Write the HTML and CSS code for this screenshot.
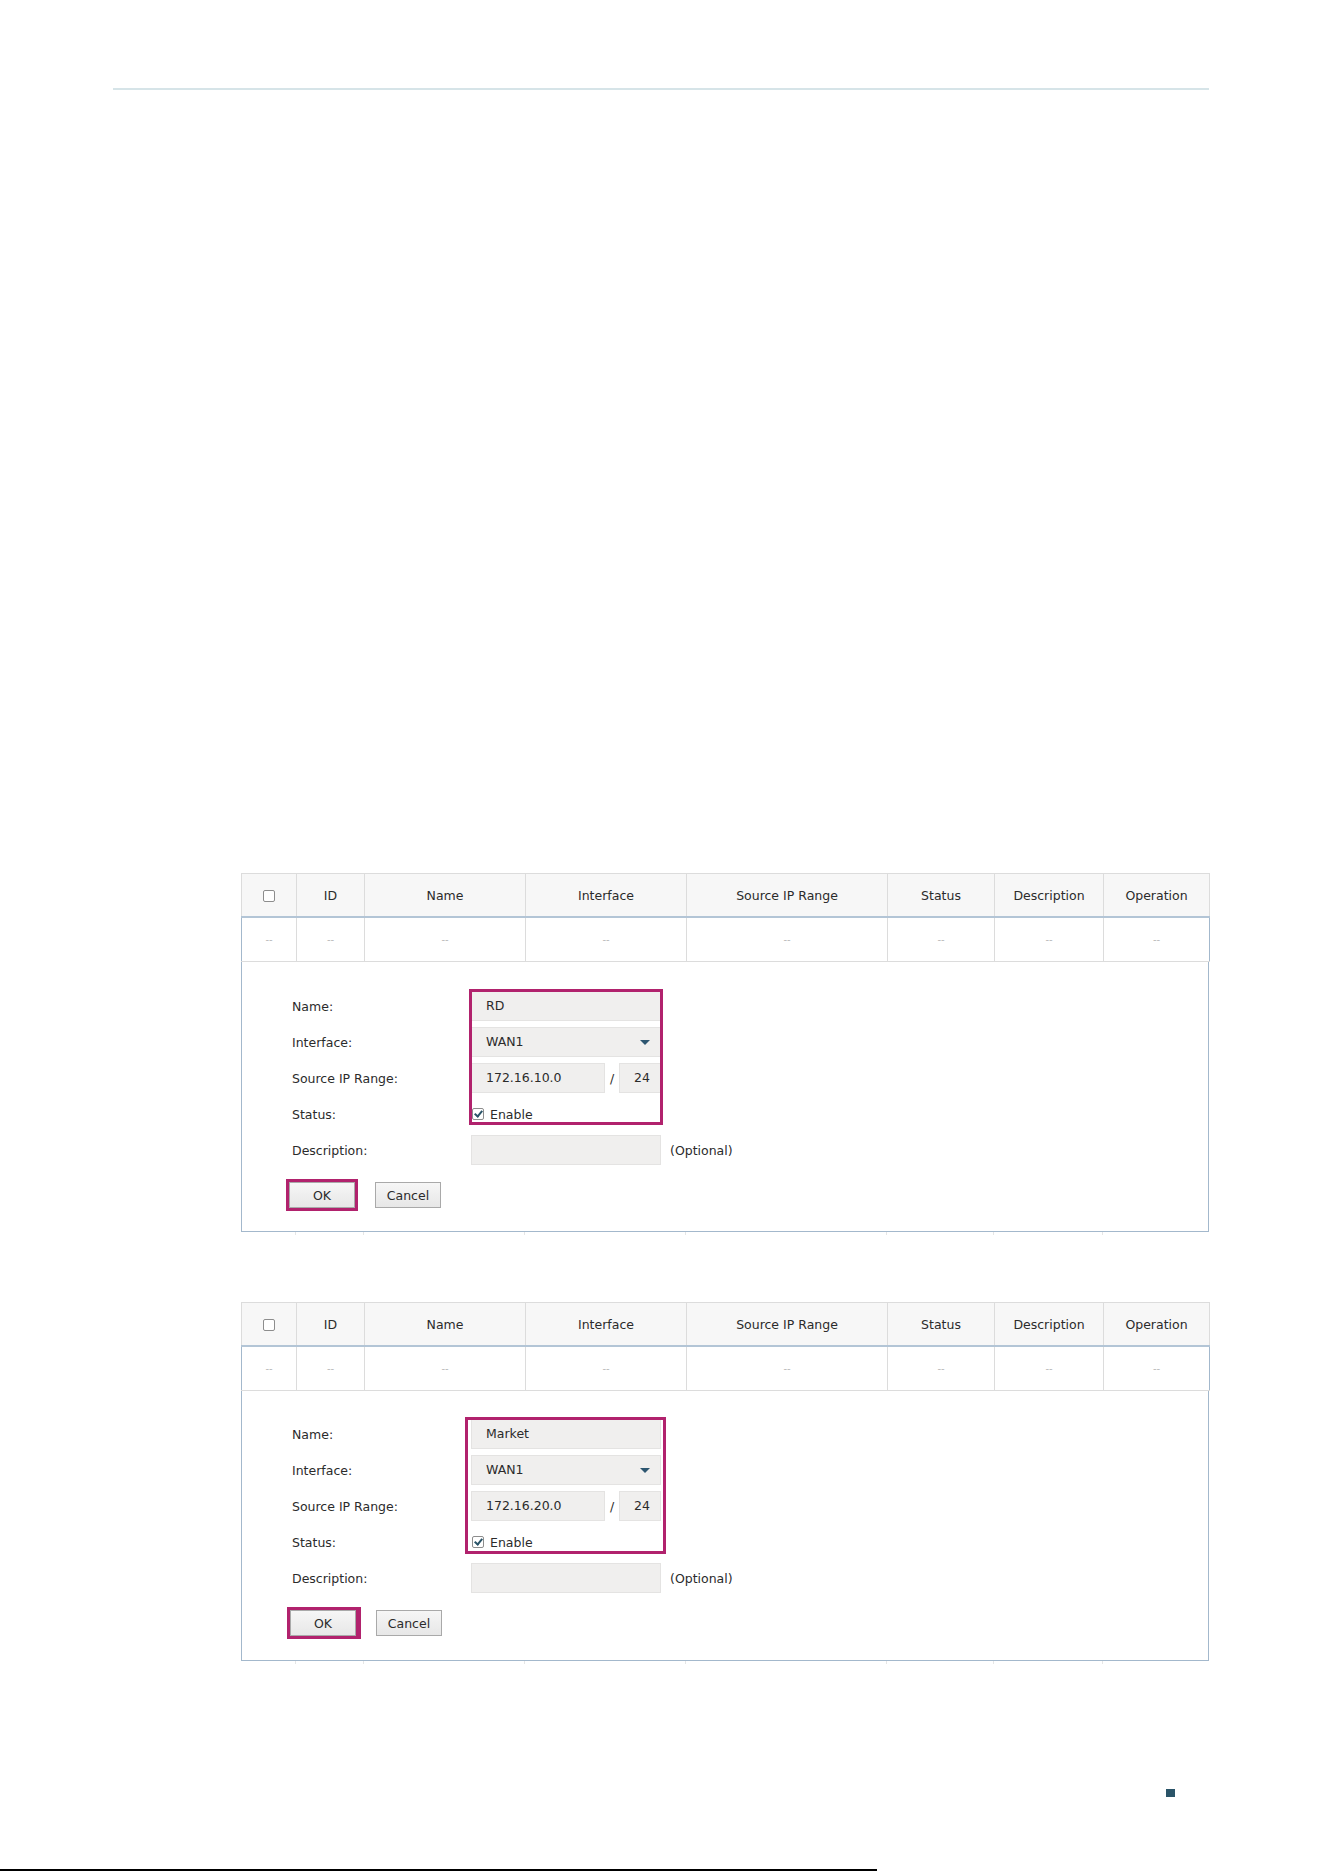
FILE: index.html
```html
<!DOCTYPE html>
<html lang="en">
<head>
  <meta charset="UTF-8" />
  <title>Policy Routing - User Groups</title>
  <link rel="stylesheet" href="styles.css">
</head>
<body>
  <div class="page">
    <div class="rule"></div>

    <!-- first entry: RD -->
    <div class="figure fig-rd">
      <table class="grid">
        <colgroup>
          <col style="width:55px"><col style="width:68px"><col style="width:161px"><col style="width:161px">
          <col style="width:201px"><col style="width:107px"><col style="width:109px"><col style="width:106px">
        </colgroup>
        <thead>
          <tr>
            <th><span class="box"></span></th>
            <th>ID</th>
            <th>Name</th>
            <th>Interface</th>
            <th>Source IP Range</th>
            <th>Status</th>
            <th>Description</th>
            <th>Operation</th>
          </tr>
        </thead>
        <tbody>
          <tr>
            <td>--</td><td>--</td><td>--</td><td>--</td><td>--</td><td>--</td><td>--</td><td>--</td>
          </tr>
        </tbody>
      </table>

      <div class="editor">
        <div class="fields">
          <label>Name:</label>
          <div class="input">RD</div>
          <span></span>

          <label>Interface:</label>
          <div class="input select">WAN1<span class="caret"></span></div>
          <span></span>

          <label>Source IP Range:</label>
          <div class="ip">
            <div class="input ip-addr">172.16.10.0</div>
            <span class="slash">/</span>
            <div class="input ip-mask">24</div>
          </div>
          <span></span>

          <label>Status:</label>
          <div class="check"><span class="box checked"></span>Enable</div>
          <span></span>

          <label>Description:</label>
          <div class="input"></div>
          <span class="hint">(Optional)</span>

          <div class="mark"></div>
        </div>

        <div class="actions">
          <span class="ok-mark"><button class="btn">OK</button></span>
          <button class="btn">Cancel</button>
        </div>
      </div>
      <div class="stubs"><i></i><i></i><i></i><i></i><i></i><i></i><i></i><i></i></div>
    </div>

    <!-- second entry: Market -->
    <div class="figure fig-market">
      <table class="grid">
        <colgroup>
          <col style="width:55px"><col style="width:68px"><col style="width:161px"><col style="width:161px">
          <col style="width:201px"><col style="width:107px"><col style="width:109px"><col style="width:106px">
        </colgroup>
        <thead>
          <tr>
            <th><span class="box"></span></th>
            <th>ID</th>
            <th>Name</th>
            <th>Interface</th>
            <th>Source IP Range</th>
            <th>Status</th>
            <th>Description</th>
            <th>Operation</th>
          </tr>
        </thead>
        <tbody>
          <tr>
            <td>--</td><td>--</td><td>--</td><td>--</td><td>--</td><td>--</td><td>--</td><td>--</td>
          </tr>
        </tbody>
      </table>

      <div class="editor">
        <div class="fields">
          <label>Name:</label>
          <div class="input">Market</div>
          <span></span>

          <label>Interface:</label>
          <div class="input select">WAN1<span class="caret"></span></div>
          <span></span>

          <label>Source IP Range:</label>
          <div class="ip">
            <div class="input ip-addr">172.16.20.0</div>
            <span class="slash">/</span>
            <div class="input ip-mask">24</div>
          </div>
          <span></span>

          <label>Status:</label>
          <div class="check"><span class="box checked"></span>Enable</div>
          <span></span>

          <label>Description:</label>
          <div class="input"></div>
          <span class="hint">(Optional)</span>

          <div class="mark"></div>
        </div>

        <div class="actions">
          <span class="ok-mark"><button class="btn">OK</button></span>
          <button class="btn">Cancel</button>
        </div>
      </div>
      <div class="stubs"><i></i><i></i><i></i><i></i><i></i><i></i><i></i><i></i></div>
    </div>

    <div class="foot">
      <span class="page-mark"></span>
    </div>
    <div class="cut-line"></div>
  </div>
</body>
</html>
```

FILE: styles.css
```css
:root {
  --text: #2b2b2b;
  --line: #dcdcdc;
  --frame: #a3b8cc;
  --field: #f0efee;
  --mark: #b1226d;
  --navy: #2a5468;
}

body {
  margin: 0;
  background: #fff;
  color: var(--text);
  font-family: 'DejaVu Sans', Verdana, sans-serif;
  font-size: 12.5px;
}

.page {
  width: 1324px;
  height: 1872px;
  overflow: hidden;
  padding-top: 88px;
  box-sizing: border-box;
}

.rule {
  height: 2px;
  margin: 0 115px 0 113px;
  background: #d6e4e8;
}

.figure {
  width: 968px;
  margin-left: 241px;
}

.fig-rd { margin-top: 783px; }
.fig-market { margin-top: 67px; }

/* list table */
.grid {
  width: 968px;
  table-layout: fixed;
  border-collapse: collapse;
}

.grid th {
  height: 42px;
  padding: 0;
  background: #f7f7f7;
  border: 1px solid var(--line);
  border-bottom: 2px solid #b3c5d6;
  font-weight: normal;
  text-align: center;
}

.grid td {
  height: 43px;
  padding: 0;
  border: 1px solid var(--line);
  border-top: none;
  text-align: center;
  color: #bbb;
  font-size: 10px;
}

.grid td:first-child { border-left-color: var(--frame); }
.grid td:last-child { border-right-color: var(--frame); }

.box {
  display: inline-block;
  width: 10px;
  height: 10px;
  border: 1px solid #8d8d8d;
  border-radius: 2px;
  background: #fff;
  vertical-align: middle;
  position: relative;
}

.box.checked::after {
  content: "";
  position: absolute;
  left: 3px;
  top: 0;
  width: 3px;
  height: 6px;
  border: solid var(--navy);
  border-width: 0 2px 2px 0;
  transform: rotate(40deg);
}

/* edit panel */
.editor {
  border: 1px solid var(--frame);
  border-top: none;
  padding: 29px 0 20px 48px;
}

.fig-market .editor { padding: 28px 0 21px 48px; }

.fields {
  position: relative;
  display: grid;
  grid-template-columns: 181px 190px auto;
  grid-auto-rows: 30px;
  row-gap: 6px;
  align-items: center;
}

.fields label {
  padding-left: 2px;
}

.input {
  height: 28px;
  line-height: 28px;
  padding: 0 14px;
  background: var(--field);
  border: 1px solid #e4e3e2;
  box-sizing: content-box;
  white-space: nowrap;
}

.fields > .input {
  width: 160px;
}

.select {
  position: relative;
}

.caret {
  position: absolute;
  right: 10px;
  top: 12px;
  border-left: 5px solid transparent;
  border-right: 5px solid transparent;
  border-top: 5px solid #2d5670;
}

.ip {
  display: flex;
  align-items: center;
}

.ip-addr { width: 106px; }
.ip-mask { width: 12px; }

.slash {
  width: 14px;
  text-align: center;
}

.check {
  display: flex;
  align-items: center;
  gap: 6px;
  padding-left: 1px;
}

.hint {
  padding-left: 9px;
}

/* annotation frame drawn over the edited fields */
.mark {
  position: absolute;
  grid-column: 2 / 3;
  grid-row: 1 / 5;
  top: -2px;
  right: -2px;
  bottom: 4px;
  left: -2px;
  border: 3px solid var(--mark);
  pointer-events: none;
}

.fig-market .mark {
  top: -2px;
  right: -5px;
  bottom: 3px;
  left: -6px;
}

.actions {
  display: flex;
  align-items: center;
  margin-top: 14px;
}

.ok-mark {
  border: 3px solid var(--mark);
  margin: 0 17px 0 -4px;
  line-height: 0;
}

.fig-market .ok-mark { margin: 0 15px 0 -3px; border-right-width: 5px; }

.btn {
  width: 66px;
  height: 26px;
  padding: 0;
  margin: 0;
  font-family: inherit;
  font-size: 12.5px;
  color: var(--text);
  background: linear-gradient(#f6f6f6, #e7e7e7);
  border: 1px solid #a9a9a9;
}

.stubs {
  display: grid;
  grid-template-columns: 55px 68px 161px 161px 201px 107px 109px 106px;
  height: 3px;
}

.stubs i {
  border-right: 1px solid #e6e6e6;
}

.stubs i:last-child { border-right: none; }

/* page footer */
.foot {
  margin-top: 125px;
  padding-left: 1166px;
  height: 8px;
}

.page-mark {
  display: block;
  width: 9px;
  height: 8px;
  background: var(--navy);
}

.cut-line {
  width: 877px;
  height: 2px;
  margin-top: 72px;
  background: #000;
}
```
